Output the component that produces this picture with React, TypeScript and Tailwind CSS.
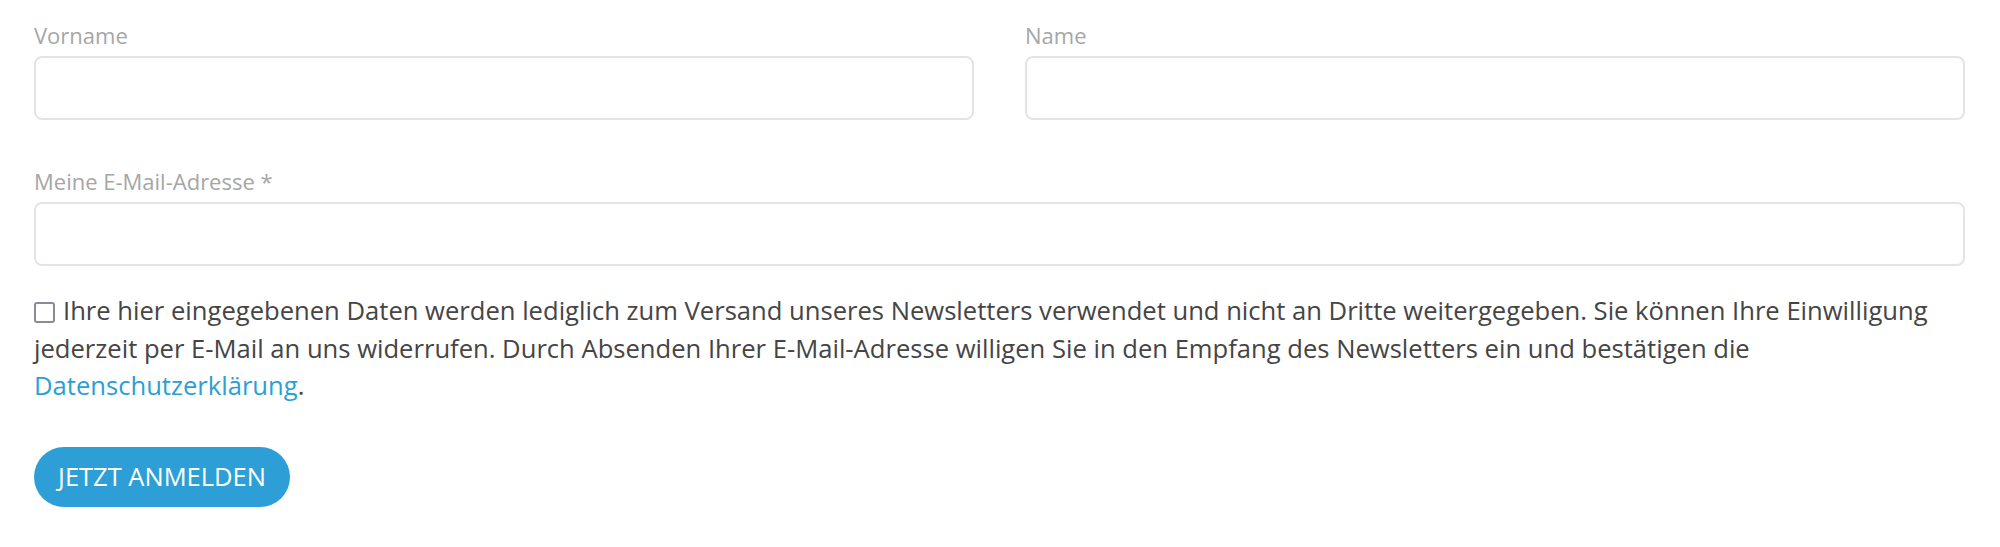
import React from "react";

const font = { fontFamily: '"Open Sans", "Noto Sans", sans-serif' };

export default function App() {
  return (
    <div className="bg-white w-full h-[547px] pl-[34px] pr-[35px] pt-[21px] font-['Open_Sans',sans-serif]" style={font}>
      <div className="grid grid-cols-2 gap-x-[51px]">
        <div>
          <label className="block text-[22px] leading-[28px] text-[#a6a6a6] mb-[7px]">Vorname</label>
          <input type="text" className="block w-full h-[64px] rounded-[8px] border-2 border-[#e3e3ed] bg-white outline-none" />
        </div>
        <div>
          <label className="block text-[22px] leading-[28px] text-[#a6a6a6] mb-[7px]">Name</label>
          <input type="text" className="block w-full h-[64px] rounded-[8px] border-2 border-[#e3e3ed] bg-white outline-none" />
        </div>
      </div>
      <div className="mt-[47px]">
        <label className="block text-[22px] leading-[28px] text-[#a6a6a6] mb-[7px]">Meine E-Mail-Adresse *</label>
        <input type="email" className="block w-full h-[64px] rounded-[8px] border-2 border-[#e3e3ed] bg-white outline-none" />
      </div>
      <p className="mt-[26px] text-[25.6px] leading-[37.5px] text-[#454545]">
        <input type="checkbox" className="inline-block align-[-3px] w-[21px] h-[21px] mr-[8px] appearance-none border-2 border-[#8a8a9a] rounded-[3px] bg-white" />
        Ihre hier eingegebenen Daten werden lediglich zum Versand unseres Newsletters verwendet und nicht an Dritte weitergegeben. Sie können Ihre Einwilligung jederzeit per E-Mail an uns widerrufen. Durch Absenden Ihrer E-Mail-Adresse willigen Sie in den Empfang des Newsletters ein und bestätigen die{" "}
        <a className="text-[#2b9fd6]">Datenschutzerklärung</a>.
      </p>
      <button className="mt-[42px] h-[60px] w-[256px] rounded-full bg-[#2d9fd6] text-white text-[25.5px] uppercase">
        Jetzt anmelden
      </button>
    </div>
  );
}
